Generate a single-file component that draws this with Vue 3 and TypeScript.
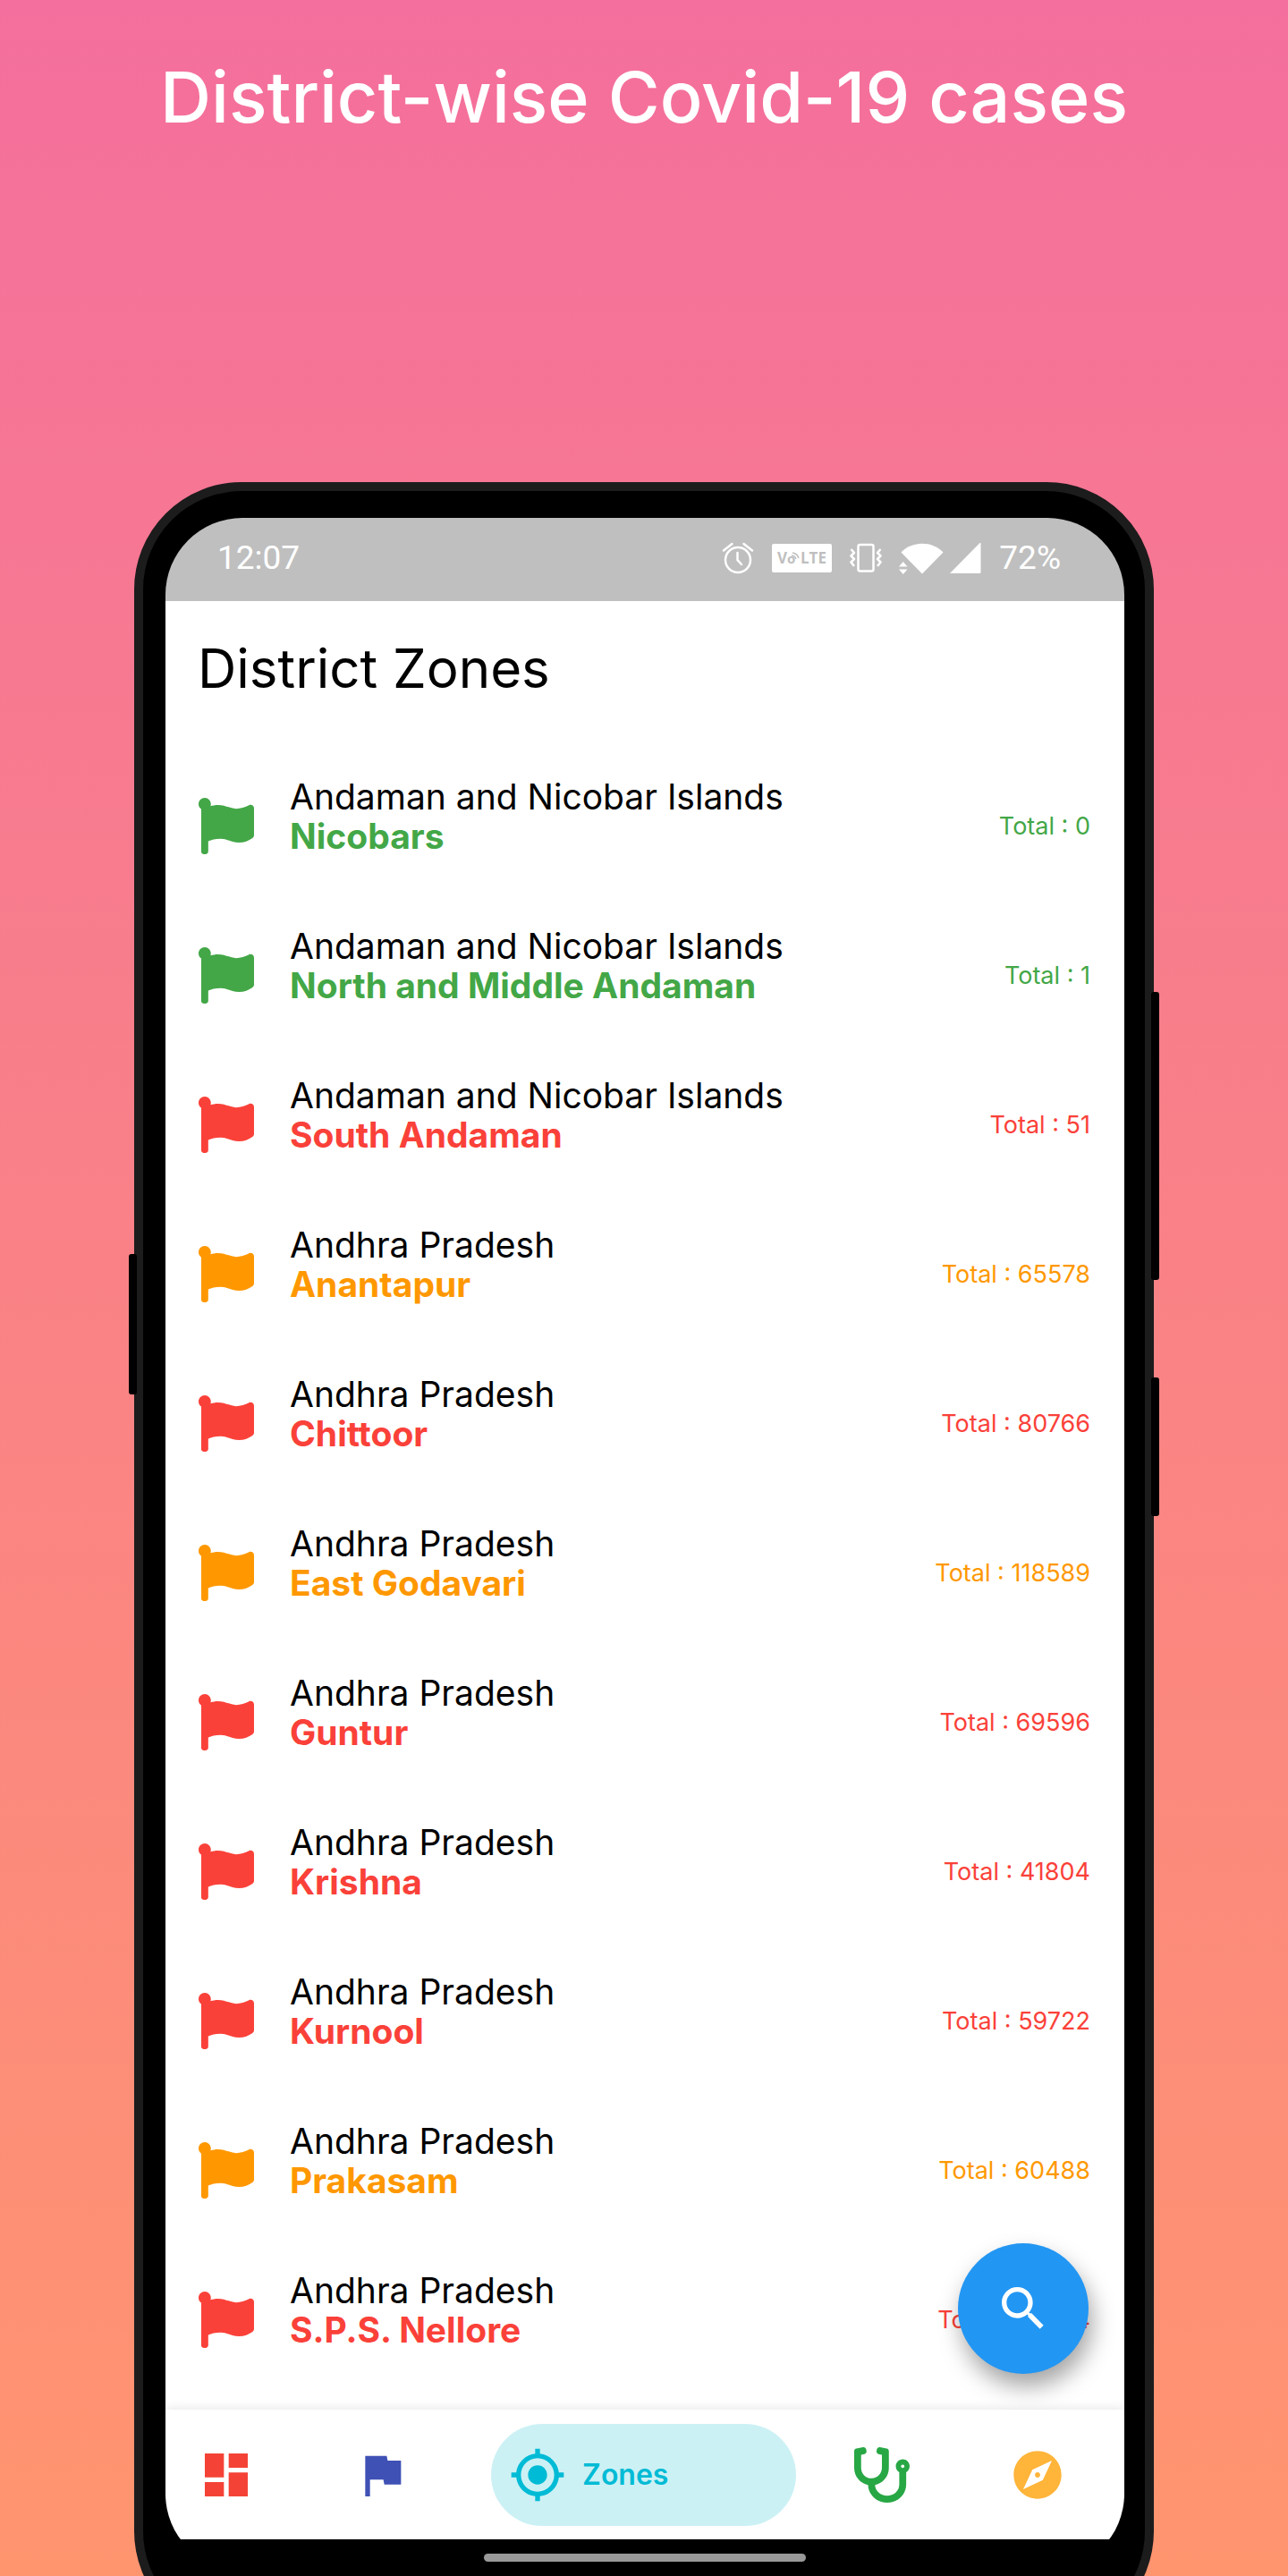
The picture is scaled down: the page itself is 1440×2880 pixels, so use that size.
<script setup lang="ts">
type Zone = 'green' | 'orange' | 'red'

interface District {
  state: string
  name: string
  total: number
  zone: Zone
}

const districts: District[] = [
  { state: 'Andaman and Nicobar Islands', name: 'Nicobars', total: 0, zone: 'green' },
  { state: 'Andaman and Nicobar Islands', name: 'North and Middle Andaman', total: 1, zone: 'green' },
  { state: 'Andaman and Nicobar Islands', name: 'South Andaman', total: 51, zone: 'red' },
  { state: 'Andhra Pradesh', name: 'Anantapur', total: 65578, zone: 'orange' },
  { state: 'Andhra Pradesh', name: 'Chittoor', total: 80766, zone: 'red' },
  { state: 'Andhra Pradesh', name: 'East Godavari', total: 118589, zone: 'orange' },
  { state: 'Andhra Pradesh', name: 'Guntur', total: 69596, zone: 'red' },
  { state: 'Andhra Pradesh', name: 'Krishna', total: 41804, zone: 'red' },
  { state: 'Andhra Pradesh', name: 'Kurnool', total: 59722, zone: 'red' },
  { state: 'Andhra Pradesh', name: 'Prakasam', total: 60488, zone: 'orange' },
  { state: 'Andhra Pradesh', name: 'S.P.S. Nellore', total: 60404, zone: 'red' },
]
</script>

<template>
  <div class="page">
    <h1 class="headline">District-wise Covid-19 cases</h1>

    <div class="phone">
      <span class="key key-left"></span>
      <span class="key key-volume"></span>
      <span class="key key-power"></span>

      <div class="screen">
        <div class="status">
          <span class="clock">12:07</span>
          <div class="status-icons">
            <svg class="alarm" width="36" height="36" viewBox="0 0 36 36" fill="none" stroke="#fff" stroke-width="2.500" stroke-linecap="round">
              <circle cx="18" cy="20" r="14" />
              <path d="M17.500 12v8l4.500 5M2 9.500 11.500 2M34 9.500 24.500 2" />
            </svg>
            <svg class="volte" width="67" height="32" viewBox="0 0 67 32">
              <rect width="67" height="32" rx="2" fill="#fff" />
              <text x="6" y="22" class="volte-text">V</text>
              <text x="17" y="22" class="volte-small">o</text>
              <text x="32" y="22" class="volte-text">LTE</text>
              <path d="M22 13a6 6 0 0 1 5 4M23 10a9 9 0 0 1 7 6" fill="none" stroke="#bfbfbf" stroke-width="1.500" />
            </svg>
            <svg class="vibrate" width="36" height="34" viewBox="0 0 36 34" fill="none" stroke="#fff" stroke-width="2.500" stroke-linejoin="round">
              <rect x="9.500" y="2" width="17" height="29.500" rx="2" />
              <path d="M1.500 7l3.500 4-3.500 3.500L5 18l-3.500 3.500L5 26M34.500 7 31 11l3.500 3.500L31 18l3.500 3.500L31 26" />
            </svg>
            <svg class="wifi" width="50" height="36" viewBox="0 0 50 36" fill="#fff">
              <path d="M2.500 11.500C15-1.500 37-1.500 49.500 11.500L26 35.500z" />
              <path d="M0 27.500 4.750 22l4.750 5.500zM0 30.500h9.500L4.750 36z" />
            </svg>
            <svg class="signal" width="35" height="36" viewBox="0 0 35 36" fill="#fff">
              <path d="M0 35 33 1.500q1.500-1.500 1.500 0V34q0 1-1 1z" />
            </svg>
          </div>
          <span class="battery">72%</span>
        </div>

        <main class="content">
          <h2 class="title">District Zones</h2>
          <ul class="list">
            <li v-for="d in districts" :key="d.name" class="row" :class="d.zone">
              <svg class="flag" viewBox="0 0 512 512" fill="currentColor">
                <path d="M349.565 98.783C295.978 98.783 251.721 64 184.348 64c-24.955 0-47.309 4.384-68.045 12.013a55.947 55.947 0 0 0 3.586-23.562C118.117 24.015 94.806 1.206 66.338.048 34.345-1.254 8 24.296 8 56c0 19.026 9.497 35.825 24 45.945V488c0 13.255 10.745 24 24 24h16c13.255 0 24-10.745 24-24v-94.400c28.311-12.064 63.582-22.122 114.435-22.122 53.588 0 97.844 34.783 165.217 34.783 48.169 0 86.667-16.294 122.505-40.858C506.840 359.452 512 349.571 512 339.045v-243.100c0-23.393-24.269-38.870-45.485-29.016-34.338 15.948-76.454 31.854-116.950 31.854z" />
              </svg>
              <div class="names">
                <span class="state">{{ d.state }}</span>
                <strong class="district">{{ d.name }}</strong>
              </div>
              <span class="total">Total : {{ d.total }}</span>
            </li>
          </ul>
          <button class="fab" type="button" aria-label="Search">
            <svg width="64" height="64" viewBox="0 0 24 24" fill="#fff">
              <path d="M15.500 14h-.79l-.28-.27C15.410 12.590 16 11.110 16 9.500 16 5.910 13.090 3 9.500 3S3 5.910 3 9.500 5.910 16 9.500 16c1.610 0 3.090-.59 4.230-1.570l.27.28v.79l5 4.990L20.490 19l-4.990-5zm-6 0C7.010 14 5 11.990 5 9.500S7.010 5 9.500 5 14 7.010 14 9.500 11.990 14 9.500 14z" />
            </svg>
          </button>
        </main>

        <nav class="tabs">
          <div class="tab-group">
            <button class="tab dashboard" type="button" aria-label="Dashboard">
              <svg width="64" height="64" viewBox="0 0 24 24" fill="currentColor">
                <path d="M3 13h8V3H3v10zm0 8h8v-6H3v6zm10 0h8V11h-8v10zm0-18v6h8V3h-8z" />
              </svg>
            </button>
            <button class="tab country" type="button" aria-label="Country">
              <svg width="64" height="64" viewBox="0 0 24 24" fill="currentColor">
                <path d="M14.400 6 14 4H5v17h2v-7h5.600l.4 2h7V6z" />
              </svg>
            </button>
            <button class="tab active" type="button" aria-current="page">
              <svg width="64" height="64" viewBox="0 0 24 24" fill="currentColor">
                <path d="M12 8c-2.210 0-4 1.790-4 4s1.790 4 4 4 4-1.790 4-4-1.790-4-4-4zm8.940 3c-.46-4.170-3.770-7.480-7.940-7.940V1h-2v2.060C6.830 3.520 3.520 6.830 3.060 11H1v2h2.060c.46 4.170 3.770 7.480 7.940 7.940V23h2v-2.060c4.170-.46 7.480-3.770 7.940-7.940H23v-2h-2.060zM12 19c-3.870 0-7-3.130-7-7s3.130-7 7-7 7 3.130 7 7-3.130 7-7 7z" />
              </svg>
              <span>Zones</span>
            </button>
          </div>
          <div class="tab-group">
            <button class="tab health" type="button" aria-label="Health">
              <svg width="64" height="62" viewBox="0 0 512 512" fill="currentColor">
                <path d="M447.100 112c-34.200.5-62.300 28.400-63 62.600-.5 24.300 12.500 45.600 32 56.800V344c0 57.300-50.200 104-112 104-60 0-109.200-44.100-111.900-99.200C265 333.800 320 269.200 320 192V36.600c0-11.400-8.100-21.300-19.300-23.500L237.800.5c-13-2.600-25.600 5.800-28.200 18.800L206.400 35c-2.600 13 5.800 25.600 18.800 28.200l30.700 6.100v121.400c0 52.900-42.200 96.700-95.100 97.200-53.400.5-96.900-42.700-96.900-96V69.400l30.700-6.100c13-2.600 21.400-15.200 18.800-28.200l-3.100-15.700C107.700 6.400 95.100-2 82.100.6L19.300 13C8.100 15.300 0 25.100 0 36.600V192c0 77.300 55.100 142 128.100 156.800C130.700 439.200 208.600 512 304 512c97 0 176-75.400 176-168V231.400c19.100-11.100 32-31.700 32-55.400 0-35.700-29.200-64.500-64.900-64zm.9 80c-8.800 0-16-7.200-16-16s7.200-16 16-16 16 7.200 16 16-7.200 16-16 16z" />
              </svg>
            </button>
            <button class="tab explore" type="button" aria-label="Explore">
              <svg width="64" height="64" viewBox="0 0 24 24" fill="currentColor">
                <path d="M12 10.900c-.61 0-1.100.49-1.100 1.100s.49 1.100 1.100 1.100c.61 0 1.100-.49 1.100-1.100s-.49-1.100-1.100-1.100zM12 2C6.480 2 2 6.480 2 12s4.480 10 10 10 10-4.480 10-10S17.520 2 12 2zm2.190 12.190L6 18l3.810-8.190L18 6l-3.810 8.190z" />
              </svg>
            </button>
          </div>
        </nav>

        <div class="gesture"><span class="handle"></span></div>
      </div>
    </div>
  </div>
</template>

<style>
body {
  margin: 0;
}
</style>

<style scoped>
.page {
  display: flex;
  flex-direction: column;
  height: 100vh;
  overflow: hidden;
  background: linear-gradient(180deg, #f46f9d 0%, #ff956f 100%);
  font-family: Inter, "Open Sans", sans-serif;
}

.headline {
  flex: none;
  height: 539px;
  box-sizing: border-box;
  margin: 0;
  padding-top: 60px;
  color: #fff;
  font-size: 79px;
  line-height: 96px;
  font-weight: 500;
  text-align: center;
  white-space: nowrap;
}

.phone {
  position: relative;
  flex: none;
  margin: 0 150px;
  padding: 30px 23px 66px 25px;
  border: 10px solid #1c1c1c;
  border-radius: 120px;
  background: #000;
}

.key {
  position: absolute;
  width: 9px;
  border-radius: 3px;
  background: #000;
}

.key-left {
  left: -16px;
  top: 853px;
  height: 157px;
}

.key-volume {
  right: -16px;
  top: 560px;
  height: 322px;
}

.key-power {
  right: -16px;
  top: 991px;
  height: 155px;
}

.screen {
  overflow: hidden;
  border-radius: 86px;
  background: #000;
}

.status {
  display: flex;
  align-items: center;
  height: 93px;
  box-sizing: border-box;
  padding: 0 71px 4px 58px;
  background: #bfbfbf;
  color: #fff;
  font-family: Roboto, sans-serif;
  font-size: 37px;
  line-height: 42px;
}

.status-icons {
  display: flex;
  align-items: center;
  margin-left: auto;
  margin-right: 20px;
}

.volte {
  margin-left: 20px;
}

.vibrate {
  margin-left: 20px;
}

.wifi {
  margin-left: 19px;
}

.signal {
  margin-left: 7px;
}

.volte-text {
  fill: #bfbfbf;
  font: 700 17px "Open Sans", sans-serif;
}

.volte-small {
  fill: #bfbfbf;
  font: 700 15px "Open Sans", sans-serif;
}

.content {
  position: relative;
  padding: 40px 38px 17px 36px;
  background: #fff;
}

.title {
  margin: 0 0 58px;
  color: #000;
  font-size: 60px;
  line-height: 70px;
  font-weight: 400;
}

.list {
  margin: 0;
  padding: 0;
  list-style: none;
}

.row {
  display: flex;
  align-items: center;
  height: 167px;
}

.green {
  color: #43a747;
}

.orange {
  color: #ff9800;
}

.red {
  color: #fa4139;
}

.flag {
  flex: none;
  width: 63px;
  height: 63px;
}

.names {
  display: flex;
  flex-direction: column;
  flex: 1;
  margin-left: 40px;
  margin-bottom: 22px;
  font-size: 39px;
  line-height: 44px;
}

.state {
  color: #000;
  font-weight: 400;
}

.district {
  font-weight: 700;
}

.total {
  font-size: 27px;
  line-height: 32px;
}

.fab {
  position: absolute;
  right: 40px;
  bottom: 40px;
  display: flex;
  align-items: center;
  justify-content: center;
  width: 146px;
  height: 146px;
  padding: 0;
  border: 0;
  border-radius: 50%;
  background: #2296f3;
  box-shadow: 4px 14px 26px rgba(0, 0, 0, 0.36);
}

.tabs {
  position: relative;
  display: flex;
  align-items: center;
  justify-content: space-between;
  height: 145px;
  box-sizing: border-box;
  padding: 0 45px 0 16px;
  background: #fff;
  box-shadow: 0 0 12px rgba(0, 0, 0, 0.12);
}

.tab-group {
  display: flex;
  align-items: center;
  gap: 70px;
}

.tab {
  display: flex;
  align-items: center;
  height: 114px;
  padding: 0 20px;
  border: 0;
  border-radius: 57px;
  background: none;
  font-family: inherit;
}

.active {
  gap: 18px;
  width: 341px;
  background: #ccf1f5;
  color: #00bbd5;
  font-size: 32px;
  line-height: 40px;
  font-weight: 600;
}

.dashboard {
  color: #f44336;
}

.country {
  color: #3f51b5;
}

.health {
  color: #28a745;
}

.explore {
  color: #ffb43a;
}

.gesture {
  display: flex;
  justify-content: center;
  height: 19px;
  padding-top: 16px;
}

.handle {
  width: 360px;
  height: 9px;
  border-radius: 5px;
  background: #999;
}
</style>
